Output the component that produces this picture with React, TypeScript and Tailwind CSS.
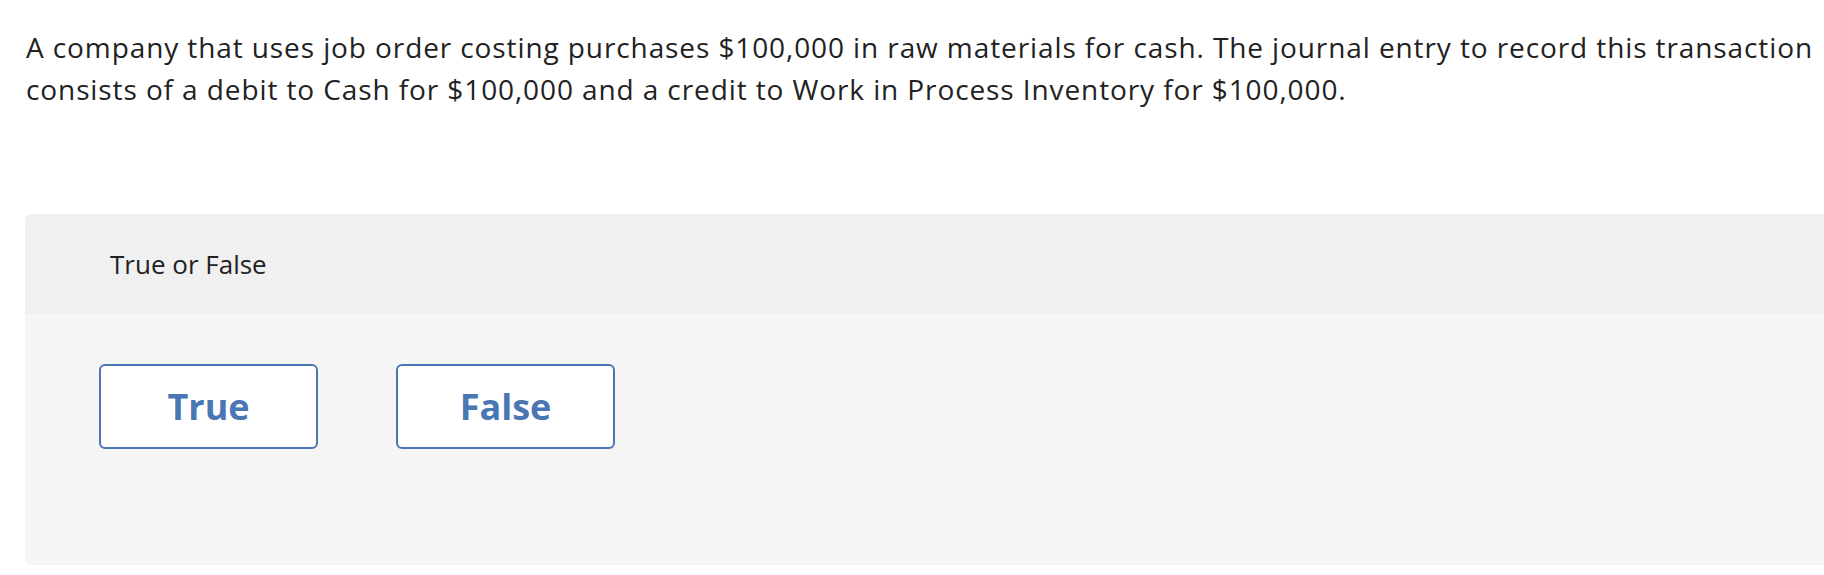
export default function App() {
  const options = ["True", "False"];

  return (
    <div className="min-h-screen bg-white font-['Open_Sans','Liberation_Sans',sans-serif] text-[#222]">
      <p className="pl-[26px] pr-[4px] pt-[26px] text-[28px] leading-[42px] tracking-[0.9px]">
        A company that uses job order costing purchases $100,000 in raw materials for cash. The journal entry to
        record this transaction consists of a debit to Cash for $100,000 and a credit to Work in Process Inventory
        for $100,000.
      </p>

      <div className="ml-[25px] mt-[104px] overflow-hidden rounded-l-[6px]">
        <div className="flex h-[100px] items-center bg-[#f0f0f0] pl-[85px]">
          <span className="text-[26px]">True or False</span>
        </div>
        <div className="flex h-[251px] gap-[78px] bg-[#f5f5f5] pl-[74px] pt-[50px]">
          {options.map((o) => (
            <button
              key={o}
              className="flex h-[85px] w-[219px] items-center justify-center rounded-[6px] border-2 border-[#4a76b4] bg-white text-[36px] font-bold text-[#4a76b4]"
            >
              {o}
            </button>
          ))}
        </div>
      </div>
    </div>
  );
}
